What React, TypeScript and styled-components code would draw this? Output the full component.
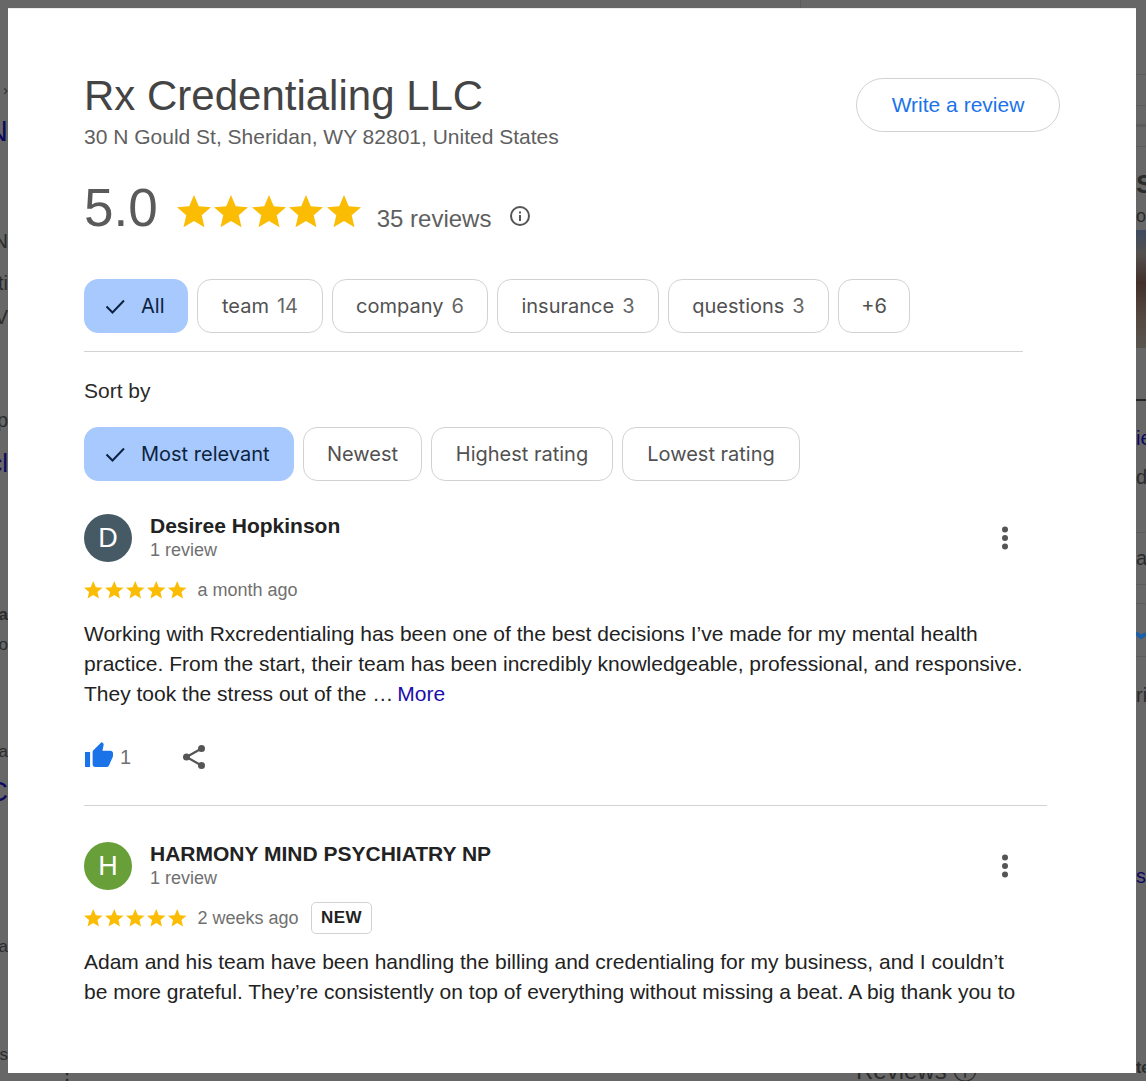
import styled, { createGlobalStyle } from "styled-components";

const GlobalStyle = createGlobalStyle`
    html, body {
        margin: 0;
        padding: 0;
        background: #676767;
    }
    * {
        box-sizing: border-box;
    }
`

const Page = styled.div`
    display: grid;
    grid-template-columns: 8px 1128px 10px;
    grid-template-rows: 8px 1065px 8px;
    width: 1146px;
    height: 1081px;
    overflow: hidden;
    font-family: "Liberation Sans", Arial, sans-serif;
`

/* the dimmed search page that peeks out round the dialog */
const TopBand = styled.div`
    grid-column: 1 / 4;
    padding-left: 800px;
`

const TopLine = styled.div`
    width: 1px;
    height: 8px;
    background: #5c5c5c;
`

const BottomBand = styled.div`
    grid-column: 1 / 4;
    display: flex;
    height: 8px;
    overflow: hidden;
    color: #2b2b2b;
`

const BottomDots = styled.span`
    margin: -1px 0 0 59px;
    font-size: 16px;
    font-weight: 700;
    line-height: 1;
`

const BottomTitle = styled.span`
    margin: -14px 0 0 781px;
    font-size: 24px;
    line-height: 1;
    white-space: nowrap;
`

const LeftStrip = styled.div`
    display: flex;
    flex-direction: column;
    align-items: flex-end;
    overflow: hidden;
`

const RightStrip = styled.div`
    display: flex;
    flex-direction: column;
    overflow: hidden;
`

const Peek = styled.span<{ $top: number; $size?: number; $color?: string; $bold?: boolean }>`
    flex: none;
    margin-top: ${(p) => p.$top}px;
    font-size: ${(p) => p.$size ?? 20}px;
    line-height: 1;
    font-weight: ${(p) => (p.$bold ? 700 : 400)};
    color: ${(p) => p.$color ?? "#2b2b2b"};
    white-space: nowrap;
`

const StripLine = styled.div<{ $top: number; $thick?: number; $dark?: boolean }>`
    flex: none;
    height: ${(p) => p.$thick ?? 1}px;
    margin-top: ${(p) => p.$top}px;
    background: ${(p) => (p.$dark ? "#262626" : "#5c5c5c")};
`

const PeekPhoto = styled.div`
    flex: none;
    height: 118px;
    margin-top: 5px;
    background: linear-gradient(180deg, #3d4a60 0%, #54504e 20%, #43302b 45%, #54473f 72%, #5a544f 100%);
`

const PeekMark = styled.svg`
    flex: none;
    display: block;
    margin-top: 28px;
`

const Modal = styled.div`
    height: 1065px;
    padding: 0 76px;
    background: #fff;
    border-top: 1px solid #ececec;
    overflow: hidden;
`

const Header = styled.div`
    display: flex;
    justify-content: space-between;
    align-items: flex-start;
    padding-top: 61px;
`

const Title = styled.h1`
    margin: 0;
    font-size: 42px;
    line-height: 52px;
    font-weight: 400;
    color: #444;
`

const Address = styled.div`
    margin-top: 2px;
    font-size: 21px;
    line-height: 26px;
    color: #5f5f5f;
`

const WriteButton = styled.button`
    width: 204px;
    height: 54px;
    margin: 8px 0 0;
    border: 1px solid #d2d2d2;
    border-radius: 27px;
    background: #fff;
    font-family: inherit;
    font-size: 21px;
    color: #1a73e8;
`

const Summary = styled.div`
    display: flex;
    align-items: center;
    height: 68px;
    margin-top: 24px;
`

const Score = styled.div`
    font-size: 53px;
    line-height: 68px;
    color: #5a5a5a;
    margin-right: 19px;
`

const SummaryStars = styled.div`
    margin-top: 7px;
`

const ReviewCount = styled.div`
    margin: 22px 18px 0 16px;
    font-size: 24px;
    color: #5f5f5f;
`

const InfoWrap = styled.div`
    display: flex;
    margin-top: 16px;
`

const Stars = styled.div<{ $gap: number }>`
    display: flex;
    gap: ${(p) => p.$gap}px;
`

const ChipRow = styled.div<{ $top: number }>`
    display: flex;
    gap: 9px;
    margin-top: ${(p) => p.$top}px;
`

const Chip = styled.div<{ $active?: boolean; $width: number }>`
    display: flex;
    align-items: center;
    justify-content: ${(p) => (p.$active ? "flex-start" : "center")};
    gap: 14px;
    width: ${(p) => p.$width}px;
    height: 54px;
    padding-left: ${(p) => (p.$active ? "18px" : "0")};
    border-radius: 14px;
    border: 1px solid ${(p) => (p.$active ? "#a8c9fd" : "#d2d2d2")};
    background: ${(p) => (p.$active ? "#a8c9fd" : "#fff")};
    color: ${(p) => (p.$active ? "#0c2340" : "#515151")};
    font-family: Inter, "Liberation Sans", sans-serif;
    font-size: 20px;
`

const ChipCount = styled.span`
    margin-left: 8px;
    color: #666;
`

const Divider = styled.div<{ $width: number; $top: number }>`
    width: ${(p) => p.$width}px;
    height: 1px;
    margin-top: ${(p) => p.$top}px;
    background: #d3d3d3;
`

const SortLabel = styled.div`
    margin-top: 26px;
    font-size: 21px;
    line-height: 26px;
    color: #2a2a2a;
`

const Review = styled.div<{ $top: number }>`
    margin-top: ${(p) => p.$top}px;
`

const ReviewHead = styled.div`
    display: flex;
    gap: 18px;
    align-items: flex-start;
    padding-right: 51px;
`

const Reviewer = styled.div`
    flex: 1;
`

const Avatar = styled.div<{ $color: string }>`
    width: 48px;
    height: 48px;
    border-radius: 50%;
    display: flex;
    align-items: center;
    justify-content: center;
    background: ${(p) => p.$color};
    color: #fff;
    font-size: 27px;
`

const Name = styled.div`
    font-size: 21px;
    line-height: 24px;
    font-weight: 700;
    color: #222;
`

const ReviewerMeta = styled.div`
    font-size: 18px;
    line-height: 24px;
    color: #707070;
`

const MoreDots = styled.svg`
    margin-top: 12px;
`

const RatingRow = styled.div`
    display: flex;
    align-items: center;
    height: 32px;
    margin-top: 12px;
    color: #707070;
    font-size: 18px;
`

const When = styled.span`
    margin-left: 11px;
`

const NewTag = styled.span`
    margin-left: 12px;
    height: 32px;
    padding: 0 9.5px;
    display: flex;
    align-items: center;
    border: 1px solid #d2d2d2;
    border-radius: 5px;
    font-size: 17px;
    font-weight: 700;
    letter-spacing: 0.4px;
    color: #222;
`

const Body = styled.p`
    width: 940px;
    margin: 13px 0 0;
    font-size: 21px;
    line-height: 30px;
    color: #222;
`

const MoreLink = styled.span`
    margin-left: 4px;
    color: #1a0dab;
`

const Actions = styled.div`
    display: flex;
    align-items: center;
    height: 30px;
    margin-top: 33px;
    padding-left: 1px;
    color: #707070;
    font-size: 20px;
`

const ThumbSvg = styled.svg`
    margin-bottom: 6px;
`

const LikeCount = styled.span`
    margin: 0 51px 0 7px;
`

const Star = ({ width }: { width: number }) => (
    <svg width={width} height={width * 0.951} viewBox="2 2 20 19.02">
        <path fill="#fbbc04" d="M12 17.27L18.18 21l-1.64-7.03L22 9.24l-7.19-.61L12 2 9.19 8.63 2 9.24l5.46 4.73L5.82 21z" />
    </svg>
)

const FiveStars = ({ width, gap }: { width: number; gap: number }) => (
    <Stars $gap={gap}>
        {[0, 1, 2, 3, 4].map((i) => (
            <Star key={i} width={width} />
        ))}
    </Stars>
)

const Check = () => (
    <svg width="24" height="24" viewBox="0 0 24 24">
        <path fill="none" stroke="#0c2340" strokeWidth="2" d="M3.5 12.5l6 6L21 6.5" />
    </svg>
)

const InfoIcon = () => (
    <svg width="22" height="22" viewBox="0 0 22 22">
        <circle cx="11" cy="11" r="9" fill="none" stroke="#555" strokeWidth="2" />
        <rect x="10" y="10" width="2" height="6" fill="#555" />
        <rect x="10" y="6.5" width="2" height="2" fill="#555" />
    </svg>
)

const Dots = () => (
    <MoreDots width="8" height="24" viewBox="0 0 8 24">
        <circle cx="4" cy="3.5" r="3" fill="#555" />
        <circle cx="4" cy="12" r="3" fill="#555" />
        <circle cx="4" cy="20.5" r="3" fill="#555" />
    </MoreDots>
)

const ThumbUp = () => (
    <ThumbSvg width="28" height="25" viewBox="1 1 22 20" preserveAspectRatio="none">
        <path
            fill="#1a73e8"
            d="M1 21h4V9H1v12zm22-11c0-1.1-.9-2-2-2h-6.31l.95-4.57.03-.32c0-.41-.17-.79-.44-1.06L14.17 1 7.59 7.59C7.22 7.95 7 8.45 7 9v10c0 1.1.9 2 2 2h9c.83 0 1.54-.5 1.84-1.22l3.02-7.05c.09-.23.14-.47.14-.73v-2z"
        />
    </ThumbSvg>
)

const ShareIcon = () => (
    <svg width="24" height="26" viewBox="0 0 24 26">
        <path fill="none" stroke="#555" strokeWidth="2.2" d="M19.5 4.5L4.5 13l15 8.5" />
        <circle cx="19.5" cy="4.5" r="3.5" fill="#555" />
        <circle cx="4.5" cy="13" r="3.5" fill="#555" />
        <circle cx="19.5" cy="21.5" r="3.5" fill="#555" />
    </svg>
)

const App = () => {
    return (
        <>
            <GlobalStyle />
            <Page>
                <TopBand>
                    <TopLine />
                </TopBand>

                <LeftStrip>
                    <Peek $top={75} $size={14}>›</Peek>
                    <Peek $top={19} $size={30} $color="#0d0860">N</Peek>
                    <Peek $top={85}>N</Peek>
                    <Peek $top={22}>ti</Peek>
                    <Peek $top={14}>V</Peek>
                    <Peek $top={83}>p</Peek>
                    <Peek $top={20} $size={26} $color="#0d0860">cl</Peek>
                    <Peek $top={130} $size={17} $bold>ia</Peek>
                    <Peek $top={13} $size={17}>o</Peek>
                    <Peek $top={90} $size={17}>a</Peek>
                    <Peek $top={18} $size={28} $color="#0d0860">C</Peek>
                    <Peek $top={132} $size={17}>a</Peek>
                    <Peek $top={91} $size={17}>ss</Peek>
                </LeftStrip>

                <Modal>
                    <Header>
                        <div>
                            <Title>Rx Credentialing LLC</Title>
                            <Address>30 N Gould St, Sheridan, WY 82801, United States</Address>
                        </div>
                        <WriteButton>Write a review</WriteButton>
                    </Header>

                    <Summary>
                        <Score>5.0</Score>
                        <SummaryStars>
                            <FiveStars width={34} gap={3.5} />
                        </SummaryStars>
                        <ReviewCount>35 reviews</ReviewCount>
                        <InfoWrap>
                            <InfoIcon />
                        </InfoWrap>
                    </Summary>

                    <ChipRow $top={37}>
                        <Chip $active $width={104}><Check />All</Chip>
                        <Chip $width={126}><span>team<ChipCount>14</ChipCount></span></Chip>
                        <Chip $width={156}><span>company<ChipCount>6</ChipCount></span></Chip>
                        <Chip $width={162}><span>insurance<ChipCount>3</ChipCount></span></Chip>
                        <Chip $width={161}><span>questions<ChipCount>3</ChipCount></span></Chip>
                        <Chip $width={72}>+6</Chip>
                    </ChipRow>
                    <Divider $width={939} $top={18} />

                    <SortLabel>Sort by</SortLabel>
                    <ChipRow $top={23}>
                        <Chip $active $width={210}><Check />Most relevant</Chip>
                        <Chip $width={119}>Newest</Chip>
                        <Chip $width={182}>Highest rating</Chip>
                        <Chip $width={178}>Lowest rating</Chip>
                    </ChipRow>

                    <Review $top={33}>
                        <ReviewHead>
                            <Avatar $color="#455a64">D</Avatar>
                            <Reviewer>
                                <Name>Desiree Hopkinson</Name>
                                <ReviewerMeta>1 review</ReviewerMeta>
                            </Reviewer>
                            <Dots />
                        </ReviewHead>
                        <RatingRow>
                            <FiveStars width={18.5} gap={2.5} />
                            <When>a month ago</When>
                        </RatingRow>
                        <Body>
                            Working with Rxcredentialing has been one of the best decisions I’ve made for my mental health practice. From the start, their team has been incredibly knowledgeable, professional, and responsive. They took the stress out of the …<MoreLink>More</MoreLink>
                        </Body>
                        <Actions>
                            <ThumbUp />
                            <LikeCount>1</LikeCount>
                            <ShareIcon />
                        </Actions>
                        <Divider $width={963} $top={33} />
                    </Review>

                    <Review $top={36}>
                        <ReviewHead>
                            <Avatar $color="#689f38">H</Avatar>
                            <Reviewer>
                                <Name>HARMONY MIND PSYCHIATRY NP</Name>
                                <ReviewerMeta>1 review</ReviewerMeta>
                            </Reviewer>
                            <Dots />
                        </ReviewHead>
                        <RatingRow>
                            <FiveStars width={18.5} gap={2.5} />
                            <When>2 weeks ago</When>
                            <NewTag>NEW</NewTag>
                        </RatingRow>
                        <Body>
                            Adam and his team have been handling the billing and credentialing for my business, and I couldn’t be more grateful. They’re consistently on top of everything without missing a beat. A big thank you to
                        </Body>
                    </Review>
                </Modal>

                <RightStrip>
                    <StripLine $top={66} />
                    <StripLine $top={30} />
                    <StripLine $top={18} $thick={3} />
                    <StripLine $top={19} />
                    <Peek $top={24} $size={26} $bold>Sh</Peek>
                    <Peek $top={10} $size={18}>ou</Peek>
                    <PeekPhoto />
                    <StripLine $top={51} $thick={2} $dark />
                    <Peek $top={27} $color="#0d0860">ie</Peek>
                    <Peek $top={19}>d</Peek>
                    <StripLine $top={45} />
                    <Peek $top={15}>as</Peek>
                    <StripLine $top={16} />
                    <StripLine $top={18} />
                    <PeekMark width="10" height="8" viewBox="0 0 10 8">
                        <path fill="none" stroke="#1c5fa8" strokeWidth="4" d="M0 1l5 4 5-3" />
                    </PeekMark>
                    <StripLine $top={16} />
                    <Peek $top={28}>ri</Peek>
                    <Peek $top={161} $color="#0d0860">si</Peek>
                    <Peek $top={174} $size={16} $bold>te</Peek>
                </RightStrip>

                <BottomBand>
                    <BottomDots>⋮</BottomDots>
                    <BottomTitle>Reviews ⓘ</BottomTitle>
                </BottomBand>
            </Page>
        </>
    )
}

export default App;
